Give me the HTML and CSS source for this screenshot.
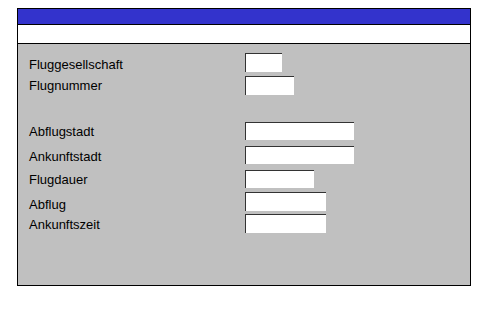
FILE: index.html
```html
<!DOCTYPE html>
<html lang="de">
<head>
<meta charset="utf-8">
<title>Flug</title>
<link rel="stylesheet" href="styles.css">
</head>
<body>
<div class="window">
  <div class="titlebar"></div>
  <div class="toolbar"></div>
  <div class="panel">
    <div class="form">
      <label class="lbl lbl-low">Fluggesellschaft</label>
      <input class="field w37" type="text">
      <label class="lbl">Flugnummer</label>
      <input class="field w49" type="text">
      <label class="lbl">Abflugstadt</label>
      <input class="field w109 short" type="text">
      <label class="lbl lbl-mid">Ankunftstadt</label>
      <input class="field w109 short" type="text">
      <label class="lbl">Flugdauer</label>
      <input class="field w69 short" type="text">
      <label class="lbl lbl-lower">Abflug</label>
      <input class="field w81" type="text">
      <label class="lbl lbl-mid">Ankunftszeit</label>
      <input class="field w81" type="text">
    </div>
  </div>
</div>
</body>
</html>
```
FILE: styles.css
```css
html, body {
  margin: 0;
  padding: 0;
  background: #ffffff;
}
body {
  padding: 8px 0 0 17px;
  font-family: "Liberation Sans", Arial, sans-serif;
  font-size: 13px;
  color: #000000;
}
.window {
  width: 452px;
  border: 1px solid #000000;
  display: flex;
  flex-direction: column;
}
.titlebar {
  height: 15px;
  background: #3333cc;
  border-bottom: 1px solid #000000;
}
.toolbar {
  height: 18px;
  background: #ffffff;
  border-bottom: 1px solid #000000;
}
.panel {
  height: 241px;
  background: #c0c0c0;
  box-sizing: border-box;
  padding: 9px 0 0 11px;
}
.form {
  display: grid;
  grid-template-columns: 216px auto;
  grid-template-rows: 23px 46px 24px 24px 22px 22px auto;
  align-items: start;
}
.lbl {
  display: block;
  line-height: 15px;
  padding-top: 2px;
  white-space: nowrap;
}
.lbl-mid { padding-top: 3px; }
.lbl-low { padding-top: 4px; }
.lbl-lower { padding-top: 5px; }
.field {
  display: block;
  box-sizing: border-box;
  height: 19px;
  margin: 0;
  padding: 0;
  border: none;
  border-top: 1px solid #333333;
  border-left: 1px solid #333333;
  background: #ffffff;
  font: inherit;
  outline: none;
}
.field.short { height: 18px; }
.w37 { width: 37px; }
.w49 { width: 49px; }
.w69 { width: 69px; }
.w81 { width: 81px; }
.w109 { width: 109px; }
```
